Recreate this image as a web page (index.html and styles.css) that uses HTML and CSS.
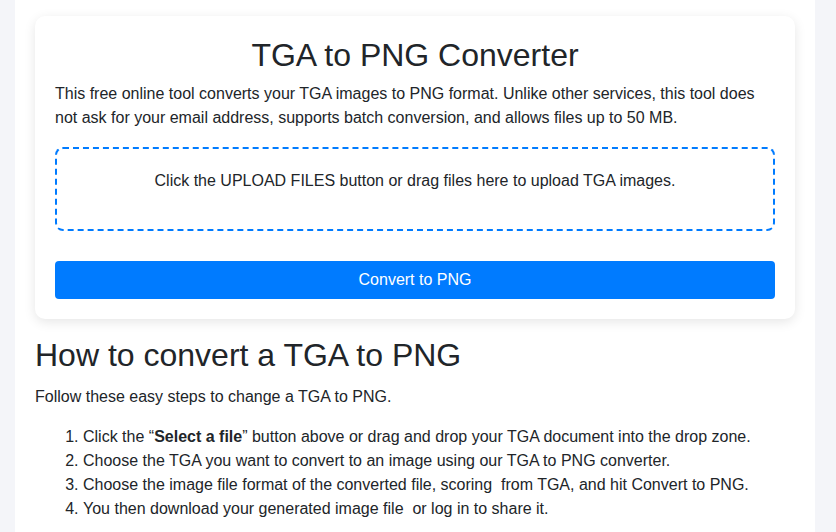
FILE: index.html
```html
<!DOCTYPE html>
<html lang="en">
<head>
<meta charset="utf-8">
<title>TGA to PNG Converter</title>
<link rel="stylesheet" href="styles.css">
</head>
<body>
<div class="container">
  <div class="card">
    <h1 class="title">TGA to PNG Converter</h1>
    <p class="intro">This free online tool converts your TGA images to PNG format. Unlike other services, this tool does not ask for your email address, supports batch conversion, and allows files up to 50 MB.</p>
    <div class="dropzone">
      <p class="drop-text">Click the UPLOAD FILES button or drag files here to upload TGA images.</p>
    </div>
    <button class="convert-btn" type="button">Convert to PNG</button>
  </div>
  <h2 class="howto-title">How to convert a TGA to PNG</h2>
  <p class="howto-intro">Follow these easy steps to change a TGA to PNG.</p>
  <ol class="steps">
    <li>Click the “<strong>Select a file</strong>” button above or drag and drop your TGA document into the drop zone.</li>
    <li>Choose the TGA you want to convert to an image using our TGA to PNG converter.</li>
    <li>Choose the image file format of the converted file, scoring&nbsp; from TGA, and hit Convert to PNG.</li>
    <li>You then download your generated image file&nbsp; or log in to share it.</li>
  </ol>
</div>
</body>
</html>
```

FILE: styles.css
```css
html, body {
  margin: 0;
  padding: 0;
}
body {
  background: #f4f5f9;
  font-family: "Liberation Sans", Arial, sans-serif;
  font-size: 16px;
  line-height: 1.5;
  color: #212529;
}
.container {
  width: 800px;
  box-sizing: border-box;
  margin-left: 15px;
  background: #ffffff;
  padding: 16px 20px 20px;
  min-height: 532px;
}
.card {
  background: #ffffff;
  border-radius: 10px;
  box-shadow: 0 3px 12px rgba(0, 0, 0, 0.1);
  padding: 20px;
  margin-bottom: 17px;
}
.title {
  margin: 0 0 8px;
  font-size: 32px;
  font-weight: 400;
  line-height: 1.2;
  text-align: center;
}
.intro {
  margin: 0 0 17px;
}
.dropzone {
  border: 2px dashed #007bff;
  border-radius: 8px;
  padding: 20px;
  text-align: center;
}
.drop-text {
  margin: 0 0 16px;
}
.convert-btn {
  display: block;
  width: 100%;
  margin-top: 30px;
  height: 38px;
  border: none;
  border-radius: 4px;
  background: #007bff;
  color: #ffffff;
  font-family: "Liberation Sans", Arial, sans-serif;
  font-size: 16px;
  line-height: 1.5;
  padding: 0;
}
.howto-title {
  margin: 0 0 10px;
  font-size: 32px;
  font-weight: 400;
  line-height: 1.2;
}
.howto-intro {
  margin: 0 0 16px;
}
.steps {
  margin: 0;
  padding-left: 48px;
}
```
